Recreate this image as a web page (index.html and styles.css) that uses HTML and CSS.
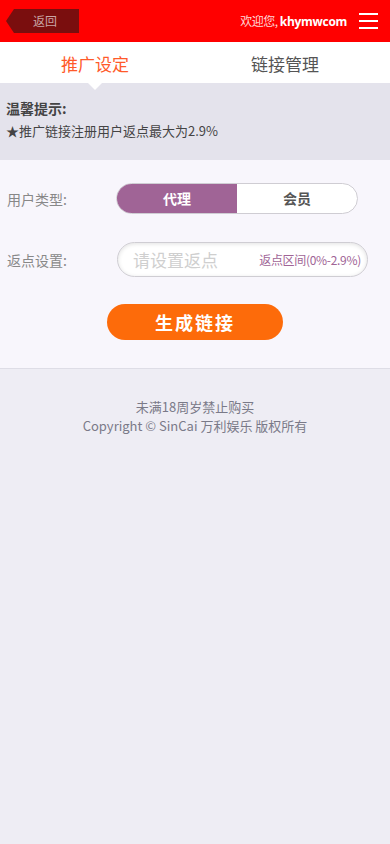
FILE: index.html
```html
<!DOCTYPE html>
<html lang="zh">
<head>
<meta charset="utf-8">
<meta name="viewport" content="width=device-width, initial-scale=1">
<title>推广设定</title>
<link rel="stylesheet" href="styles.css">
</head>
<body>
<header class="topbar">
  <a class="back">返回</a>
  <div class="topright">
    <span class="welcome">欢迎您, <b>khymwcom</b></span>
    <span class="menu"><i></i><i></i><i></i></span>
  </div>
</header>
<nav class="tabs">
  <div class="tab active">推广设定</div>
  <div class="tab">链接管理</div>
</nav>
<section class="tips">
  <div class="tips-title">温馨提示:</div>
  <div class="tips-text">★推广链接注册用户返点最大为2.9%</div>
</section>
<section class="form">
  <div class="row">
    <div class="label">用户类型:</div>
    <div class="toggle">
      <div class="opt on">代理</div>
      <div class="opt">会员</div>
    </div>
  </div>
  <div class="row row2">
    <div class="label">返点设置:</div>
    <div class="inputbox">
      <span class="ph">请设置返点</span>
      <span class="range">返点区间(0%-2.9%)</span>
    </div>
  </div>
  <div class="btnrow"><button class="gen">生成链接</button></div>
</section>
<footer class="foot">
  <div>未满18周岁禁止购买</div>
  <div>Copyright © SinCai 万利娱乐 版权所有</div>
</footer>
</body>
</html>
```
FILE: styles.css
```css
* { box-sizing: border-box; }
html, body { margin: 0; padding: 0; }
body {
  font-family: "Noto Sans CJK SC", "Open Sans", sans-serif;
  background: #eeedf4;
  width: 390px;
  min-height: 844px;
}
.topbar {
  height: 42px;
  background: #ff0000;
  display: flex;
  align-items: center;
  justify-content: space-between;
}
.back {
  position: relative;
  margin-left: 14px;
  width: 65px;
  height: 24px;
  background: #7a0e0e;
  color: #c9a6a6;
  font-size: 12px;
  line-height: 24px;
  padding-left: 19px;
}
.back::before {
  content: "";
  position: absolute;
  left: -8px;
  top: 0;
  border-right: 8px solid #7a0e0e;
  border-top: 12px solid transparent;
  border-bottom: 12px solid transparent;
}
.topright { display: flex; align-items: center; }
.welcome {
  color: #ffd9d9;
  font-size: 12px;
  letter-spacing: -0.5px;
  margin-right: 12px;
}
.welcome b { color: #fff; font-family: "Open Sans", sans-serif; font-size: 12px; letter-spacing: -0.3px; }
.menu {
  display: flex;
  flex-direction: column;
  justify-content: space-between;
  width: 19px;
  height: 16px;
  margin-right: 12px;
}
.menu i { display: block; height: 2px; background: #fff; }
.tabs {
  display: flex;
  background: #fff;
  height: 41px;
  padding-right: 10px;
}
.tab {
  flex: 1;
  text-align: center;
  font-size: 17px;
  line-height: 43px;
  color: #555;
  position: relative;
}
.tab.active { color: #ff5a2a; }
.tab.active::after {
  content: "";
  position: absolute;
  left: 50%;
  margin-left: -7px;
  bottom: -7px;
  border-top: 7px solid #fff;
  border-left: 7px solid transparent;
  border-right: 7px solid transparent;
  z-index: 2;
}
.tips {
  background: #e4e3ec;
  height: 77px;
  padding: 15px 6px 0;
  color: #444;
}
.tips-title { font-size: 14px; font-weight: bold; line-height: 20px; }
.tips-text { font-size: 13px; line-height: 20px; margin-top: 3px; }
.form {
  background: #f8f6fc;
  border-bottom: 1px solid #dedde6;
  padding: 23px 0 28px;
}
.row {
  display: flex;
  align-items: center;
}
.label {
  width: 116px;
  padding-left: 7px;
  font-size: 14px;
  color: #888;
}
.toggle {
  display: flex;
  width: 242px;
  height: 31px;
  border: 1px solid #cfcdd3;
  border-radius: 16px;
  overflow: hidden;
  background: #fff;
}
.opt {
  flex: 1;
  text-align: center;
  font-size: 14px;
  font-weight: bold;
  color: #555;
  line-height: 29px;
}
.opt.on { background: #a06496; color: #fff; }
.row2 { margin-top: 28px; }
.inputbox {
  width: 251px;
  height: 35px;
  margin-left: 1px;
  border: 1px solid #cfcdd3;
  border-radius: 18px;
  background: #fff;
  box-shadow: inset 0 1px 4px rgba(0,0,0,0.12);
  display: flex;
  align-items: center;
  justify-content: space-between;
  padding: 0 6px 0 15px;
}
.ph { font-size: 17px; color: #cfcfcf; }
.range { font-size: 12px; color: #a06496; letter-spacing: -0.3px; }
.btnrow { display: flex; justify-content: center; margin-top: 27px; }
.gen {
  width: 176px;
  height: 36px;
  border: none;
  border-radius: 18px;
  background: #fd6b0a;
  color: #fff;
  font-family: "Noto Sans CJK SC", sans-serif;
  font-size: 18px;
  font-weight: bold;
  letter-spacing: 2px;
  padding: 0;
}
.foot {
  text-align: center;
  padding-top: 28px;
  font-size: 13px;
  color: #7a7a88;
  line-height: 19px;
}
```
